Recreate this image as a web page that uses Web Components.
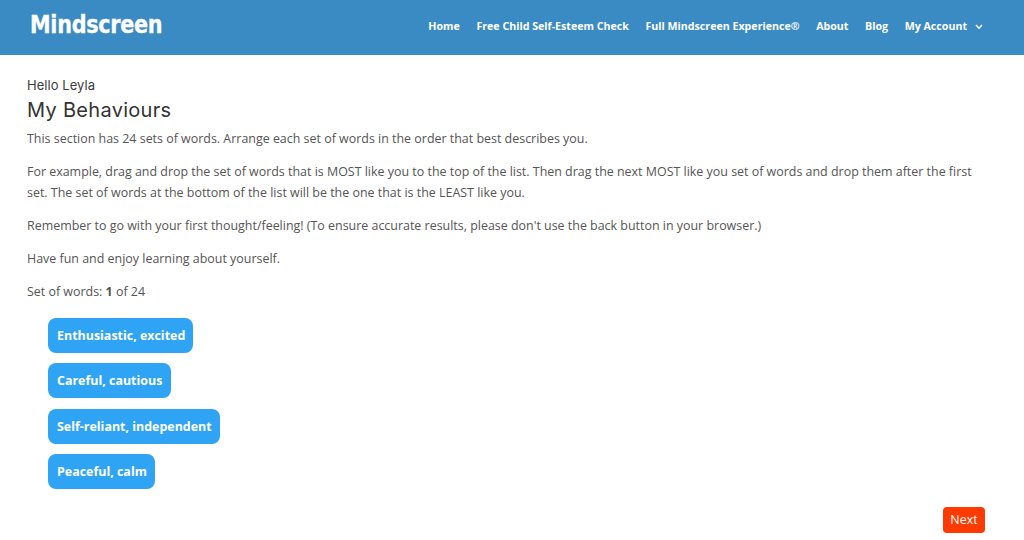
<!DOCTYPE html>
<html lang="en"><head><meta charset="utf-8"><title>My Behaviours</title>
<style>
html,body{margin:0;padding:0;background:#fff}
body{font-family:"Open Sans",sans-serif;overflow:hidden;height:540px;width:1024px}
</style></head><body>
<ms-header>
  <ms-nav-link href="#">Home</ms-nav-link>
  <ms-nav-link href="#">Free Child Self-Esteem Check</ms-nav-link>
  <ms-nav-link href="#">Full Mindscreen Experience®</ms-nav-link>
  <ms-nav-link href="#">About</ms-nav-link>
  <ms-nav-link href="#">Blog</ms-nav-link>
  <ms-nav-link href="#" caret>My Account</ms-nav-link>
</ms-header>
<ms-main>
  <span slot="hello">Hello Leyla</span>
  <span slot="title">My Behaviours</span>
  <p>This section has 24 sets of words. Arrange each set of words in the order that best describes you.</p>
  <p>For example, drag and drop the set of words that is MOST like you to the top of the list. Then drag the next MOST like you set of words and drop them after the first set. The set of words at the bottom of the list will be the one that is the LEAST like you.</p>
  <p>Remember to go with your first thought/feeling! (To ensure accurate results, please don't use the back button in your browser.)</p>
  <p>Have fun and enjoy learning about yourself.</p>
  <p>Set of words: <b>1</b> of 24</p>
  <ms-word-list>
    <ms-word>Enthusiastic, excited</ms-word>
    <ms-word>Careful, cautious</ms-word>
    <ms-word>Self-reliant, independent</ms-word>
    <ms-word>Peaceful, calm</ms-word>
  </ms-word-list>
  <ms-next>Next</ms-next>
</ms-main>
<script>
function def(name,html){
  customElements.define(name,class extends HTMLElement{
    constructor(){super();this.attachShadow({mode:"open"}).innerHTML=html;}
  });
}
def("ms-header",`<style>
:host{display:flex;align-items:center;justify-content:space-between;height:55px;background:#3a8bc3;padding:0 41px 0 30px;box-sizing:border-box}
.logo{font:700 24.5px/1 "DejaVu Sans",sans-serif;font-stretch:condensed;color:#fff;letter-spacing:-.3px;margin-top:-5px;-webkit-text-stroke:.3px #fff;transform:scaleX(.94);transform-origin:left center}
nav{display:flex;gap:16.6px;align-items:center;margin-top:-2px}
</style><div class="logo">Mindscreen</div><nav><slot></slot></nav>`);
def("ms-nav-link",`<style>
:host{display:inline-flex;align-items:center;font:700 10.65px/15px "Open Sans",sans-serif;color:#fff;white-space:nowrap}
svg{display:none;margin-left:8px;width:8px;height:6px}
:host([caret]) svg{display:block}
</style><slot></slot><svg viewBox="0 0 8 6"><path d="M1 1l3 3.2L7 1" fill="none" stroke="#fff" stroke-width="1.6"/></svg>`);
def("ms-main",`<style>
:host{display:block;padding:21px 39px 0 27px;color:#555;font:400 12.45px/21px "Open Sans",sans-serif}
.hello{font:400 13px/18px Inter,sans-serif;color:#3d3d3d;letter-spacing:.05px}
h1{margin:3px 0 5px;font:400 20px/26px Inter,sans-serif;color:#333;letter-spacing:.3px}
::slotted(p){margin:0 0 12px}
</style><div class="hello"><slot name="hello"></slot></div><h1><slot name="title"></slot></h1><slot></slot>`);
def("ms-word-list",`<style>
:host{display:flex;flex-direction:column;align-items:flex-start;gap:10.33px;margin:16px 0 0 21px}
</style><slot></slot>`);
def("ms-word",`<style>
:host{display:block;box-sizing:border-box;height:35px;padding:0 8.2px 0 9px;border-radius:8px;background:#2fa4f5;color:#fff;font:700 12.45px/36px "Open Sans",sans-serif;white-space:nowrap;cursor:grab}
</style><slot></slot>`);
def("ms-next",`<style>
:host{display:block;width:42px;height:26px;margin:18px 0 0 auto;border-radius:4px;background:#ff3a00;color:#fff;font:400 12.45px/26px "Open Sans",sans-serif;text-align:center}
</style><slot></slot>`);
</script>
</body></html>
